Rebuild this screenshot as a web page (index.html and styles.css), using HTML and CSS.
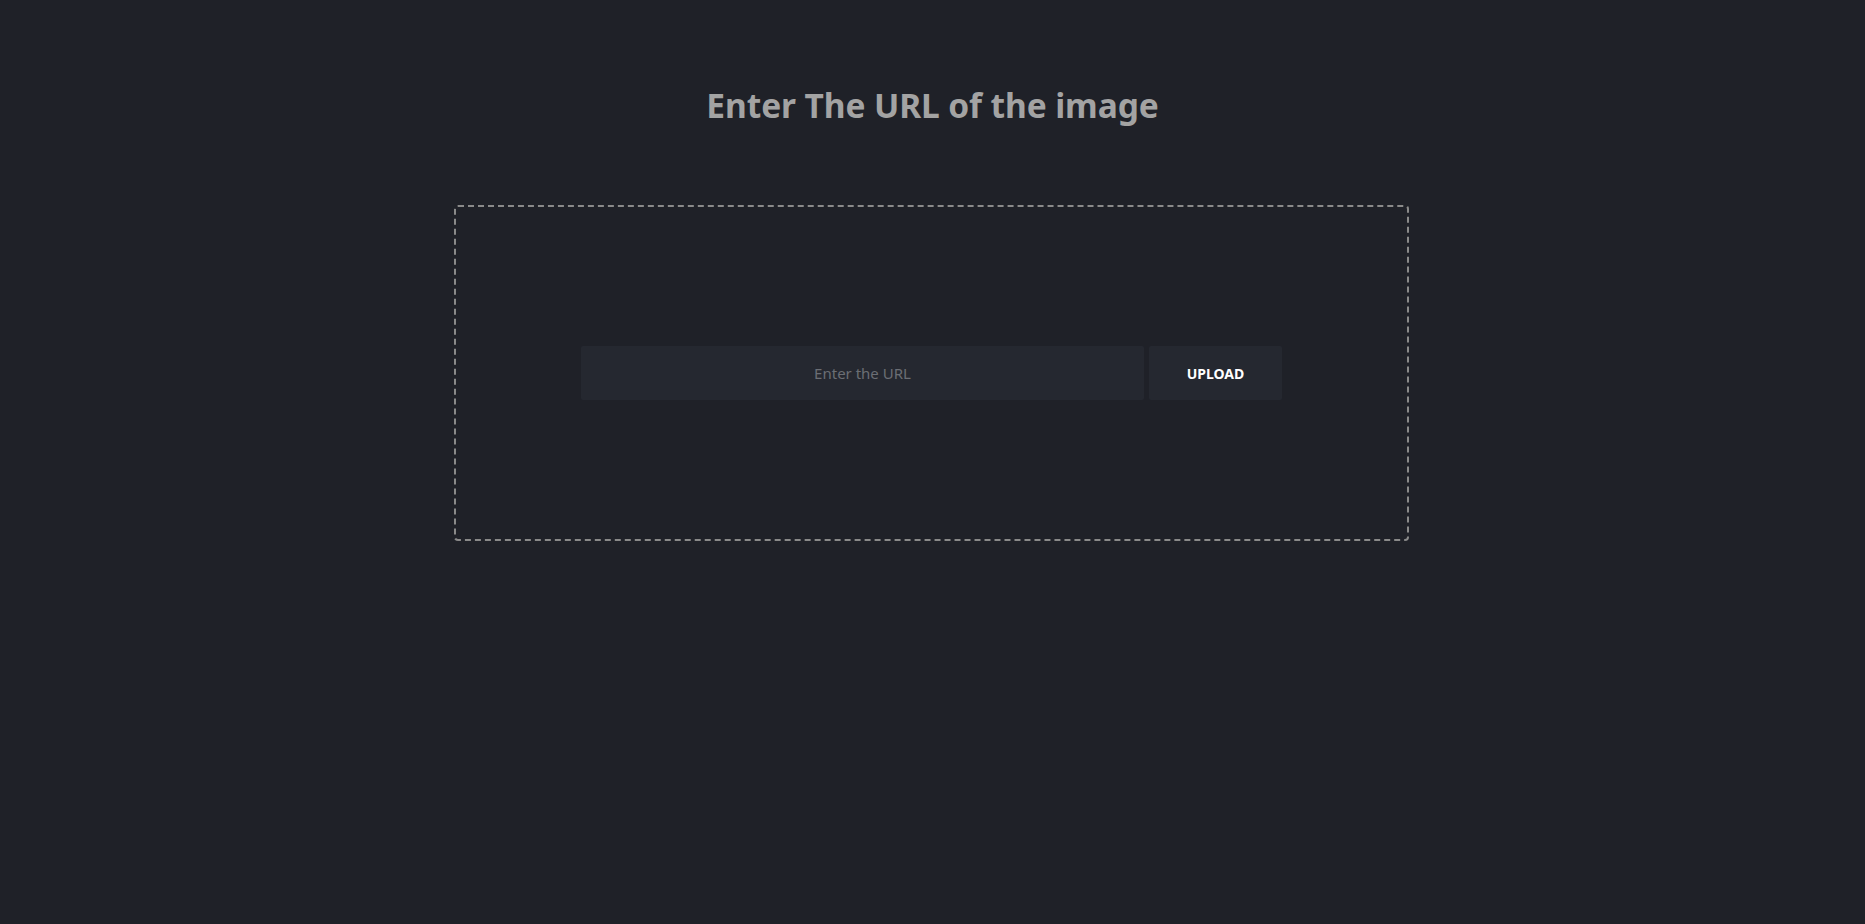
FILE: index.html
```html
<!DOCTYPE html>
<html lang="en">
<head>
<meta charset="utf-8">
<title>Upload image by URL</title>
<link rel="stylesheet" href="styles.css">
</head>
<body>
<main class="page">
  <h1 class="title">Enter The URL of the image</h1>
  <section class="dropzone">
    <form class="url-form">
      <input class="url-input" type="text" placeholder="Enter the URL">
      <button class="upload-btn" type="button">UPLOAD</button>
    </form>
  </section>
</main>
</body>
</html>
```
FILE: styles.css
```css
html, body {
  margin: 0;
  padding: 0;
  background: #1f2128;
  height: 100%;
}
.page {
  display: flex;
  flex-direction: column;
  align-items: center;
  font-family: "Noto Sans", "Open Sans", sans-serif;
}
.title {
  margin: 82px 0 0 0;
  font-size: 33.5px;
  line-height: 46px;
  font-weight: 700;
  color: #a3a3a3;
  letter-spacing: -0.1px;
}
.dropzone {
  box-sizing: border-box;
  margin: 77px 2px 0 0;
  width: 955px;
  height: 336px;
  border: 2px dashed #8a8a8a;
  border-radius: 4px;
  display: flex;
  align-items: center;
  justify-content: center;
}
.url-form {
  display: flex;
  gap: 5px;
  width: 701px;
  height: 54px;
  margin: 0;
}
.url-input {
  flex: 1;
  box-sizing: border-box;
  height: 54px;
  border: none;
  outline: none;
  border-radius: 2px;
  background: #252830;
  color: #cfcfcf;
  text-align: center;
  font-family: "Noto Sans", "Open Sans", sans-serif;
  font-size: 15px;
  padding: 0 10px;
}
.url-input::placeholder {
  color: #6b6e74;
}
.upload-btn {
  width: 133px;
  height: 54px;
  border: none;
  border-radius: 2px;
  background: #252830;
  color: #ffffff;
  font-family: "Noto Sans", "Open Sans", sans-serif;
  font-weight: 700;
  font-size: 14px;
  cursor: pointer;
}
```
